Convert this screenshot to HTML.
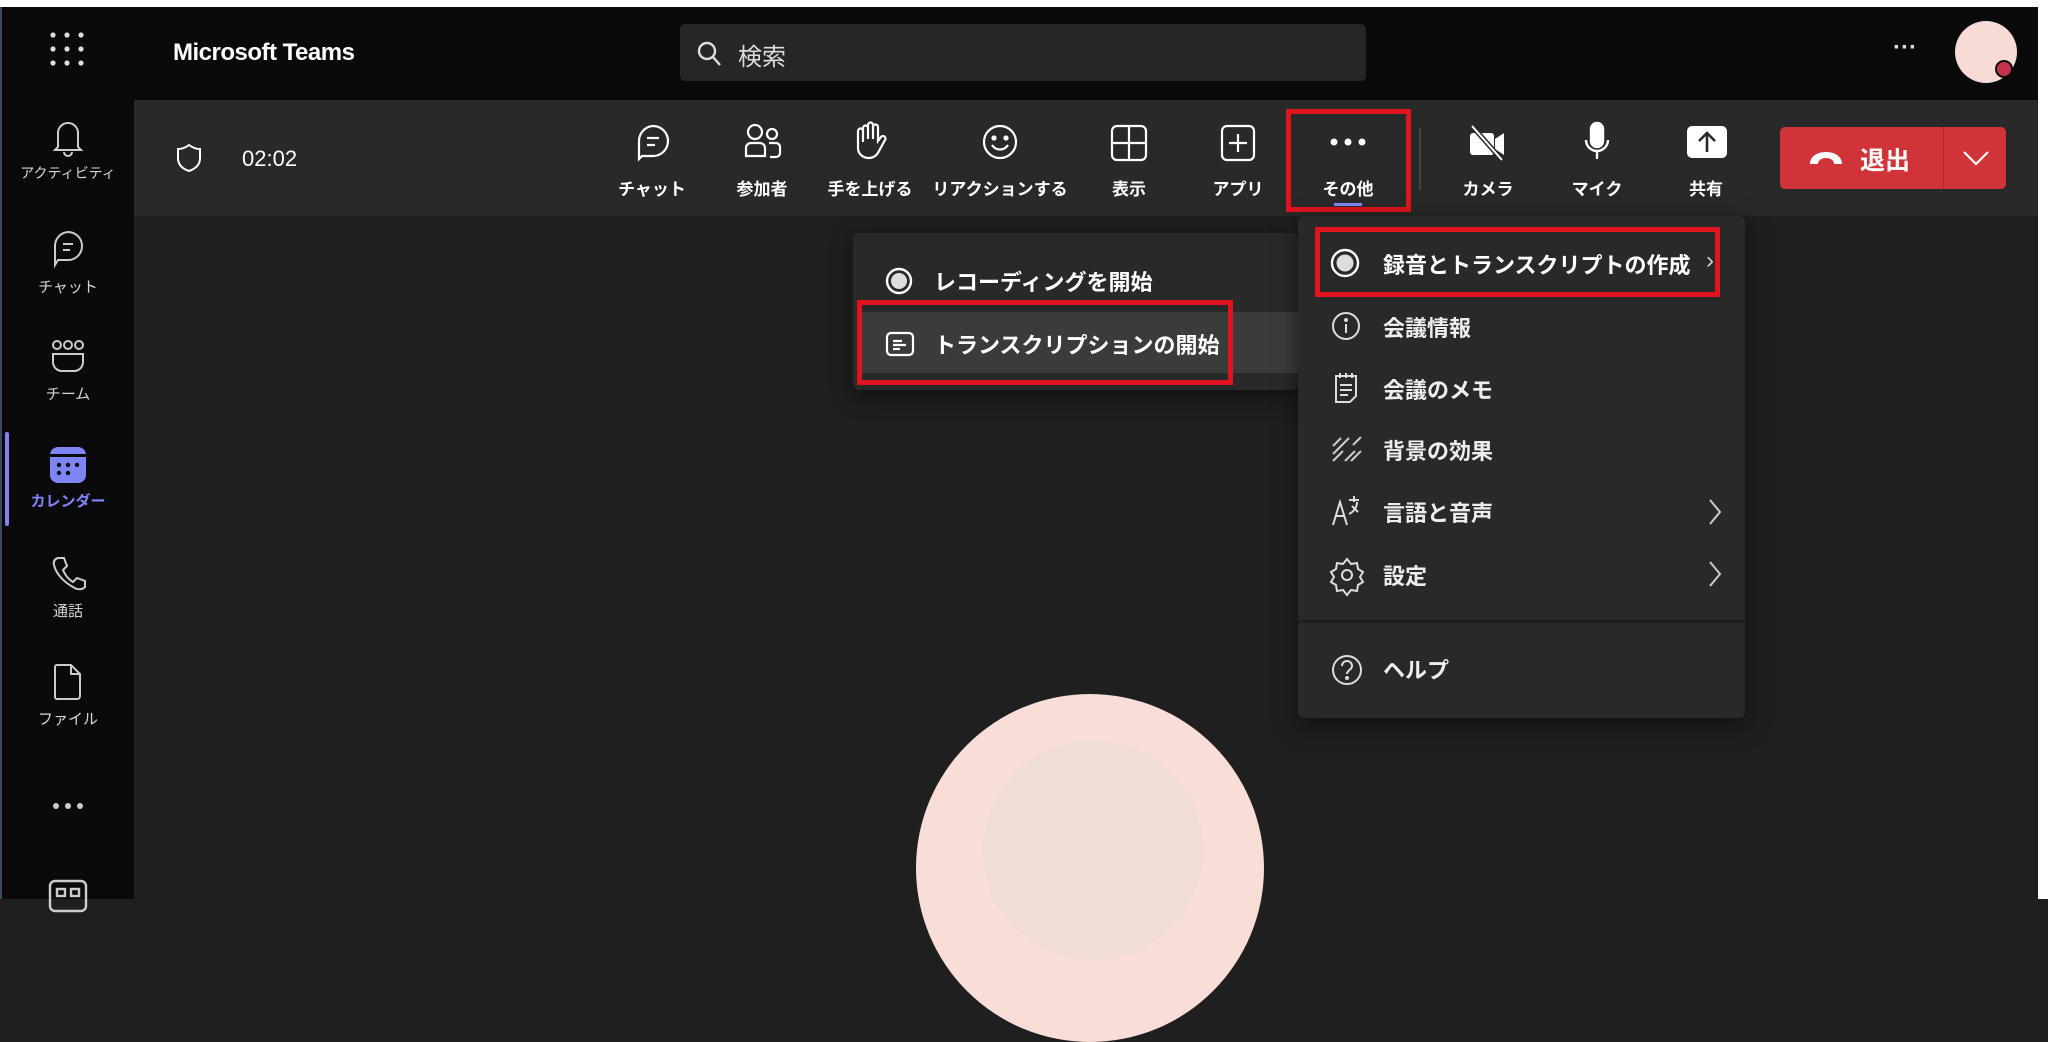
<!DOCTYPE html>
<html><head><meta charset="utf-8"><style>
*{margin:0;padding:0;box-sizing:border-box}
body{width:2048px;height:899px;background:#1f1f1f;position:relative;overflow:hidden;font-family:"Liberation Sans","Noto Sans CJK JP",sans-serif;color:#fff}
.a{position:absolute}
.lbl{position:absolute;transform:translateX(-50%);white-space:nowrap}
svg{position:absolute;overflow:visible}
.rl{font-size:15px;color:#d6d6d6}
.tl{font-size:17px;color:#fff;font-weight:bold}
.mi{position:absolute;font-size:22px;color:#fff;white-space:nowrap;font-weight:bold}
.red{position:absolute;border:5px solid #e0141e}
</style></head><body>
<div class="a" style="left:0;top:0;width:2048px;height:7px;background:#fff"></div>
<div class="a" style="left:2038px;top:0;width:10px;height:899px;background:#fff"></div>
<div class="a" style="left:0;top:7px;width:2038px;height:93px;background:#0a0a0a"></div>
<div class="a" style="left:0;top:7px;width:134px;height:892px;background:#0a0a0a"></div>
<div class="a" style="left:0;top:7px;width:2px;height:892px;background:#3a4a5a"></div>
<svg style="left:50px;top:32px" width="36" height="36"><g fill="#ddd"><circle cx="3" cy="3" r="2.6"/><circle cx="17" cy="3" r="2.6"/><circle cx="31" cy="3" r="2.6"/><circle cx="3" cy="17" r="2.6"/><circle cx="17" cy="17" r="2.6"/><circle cx="31" cy="17" r="2.6"/><circle cx="3" cy="31" r="2.6"/><circle cx="17" cy="31" r="2.6"/><circle cx="31" cy="31" r="2.6"/></g></svg>
<div class="a" style="left:173px;top:39px;font-size:24px;font-weight:bold;letter-spacing:-0.5px">Microsoft Teams</div>
<div class="a" style="left:680px;top:24px;width:686px;height:57px;background:#262626;border-radius:5px"></div>
<svg style="left:696px;top:40px" width="28" height="28" fill="none" stroke="#ddd" stroke-width="2.4"><circle cx="11" cy="11" r="8"/><path d="M17 17l7 8"/></svg>
<div class="a" style="left:738px;top:37px;font-size:24px;color:#ddd">検索</div>
<div class="a" style="left:1893px;top:34px;font-size:24px;font-weight:bold;color:#ddd">···</div>
<div class="a" style="left:1955px;top:21px;width:62px;height:62px;border-radius:50%;background:#f7dcd6"></div>
<div class="a" style="left:1995px;top:60px;width:18px;height:18px;border-radius:50%;background:#c4314b;border:2px solid #0a0a0a"></div>
<svg style="left:54px;top:120px" width="28" height="38" fill="none" stroke="#ccc" stroke-width="2"><path d="M4 27V13a10 10 0 0 1 20 0v14l3 3H1z"/><path d="M10 32a4 4 0 0 0 8 0"/></svg>
<div class="lbl rl" style="left:68px;top:163px;font-size:14px">アクティビティ</div>
<svg style="left:52px;top:230px" width="32" height="40" fill="none" stroke="#ccc" stroke-width="2"><path d="M16 2a14 14 0 0 1 0 28H6l-3 5V16A14 14 0 0 1 16 2z"/><path d="M11 14h10M11 20h7"/></svg>
<div class="lbl rl" style="left:68px;top:276px">チャット</div>
<svg style="left:50px;top:340px" width="36" height="34" fill="none" stroke="#ccc" stroke-width="2"><circle cx="7" cy="5" r="4"/><circle cx="18" cy="5" r="4"/><circle cx="29" cy="5" r="4"/><path d="M3 14h30v8a9 9 0 0 1-9 9H12a9 9 0 0 1-9-9z"/></svg>
<div class="lbl rl" style="left:68px;top:383px">チーム</div>
<div class="a" style="left:5px;top:432px;width:4px;height:94px;background:#7f85f5;border-radius:2px"></div>
<svg style="left:50px;top:447px" width="36" height="36"><rect x="0" y="0" width="36" height="36" rx="8" fill="#7f85f5"/><rect x="0" y="7" width="36" height="3" fill="#0a0a0a"/><g fill="#0a0a0a"><circle cx="9" cy="18" r="2.2"/><circle cx="18" cy="18" r="2.2"/><circle cx="27" cy="18" r="2.2"/><circle cx="9" cy="26" r="2.2"/><circle cx="18" cy="26" r="2.2"/></g></svg>
<div class="lbl rl" style="left:68px;top:490px;color:#7f85f5;font-weight:bold">カレンダー</div>
<svg style="left:52px;top:556px" width="32" height="36" fill="none" stroke="#ccc" stroke-width="2"><path d="M6 2l6 0 3 8-4 4c2 5 5 9 10 12l4-4 8 3v6c-3 3-8 3-12 0C12 26 4 18 2 9 1 5 3 3 6 2z"/></svg>
<div class="lbl rl" style="left:68px;top:600px">通話</div>
<svg style="left:54px;top:664px" width="28" height="36" fill="none" stroke="#ccc" stroke-width="2"><path d="M3 1h14l9 9v22a3 3 0 0 1-3 3H3a2 2 0 0 1-2-2V3a2 2 0 0 1 2-2z"/><path d="M17 1v9h9"/></svg>
<div class="lbl rl" style="left:68px;top:708px">ファイル</div>
<svg style="left:52px;top:802px" width="32" height="8" fill="#ccc"><circle cx="4" cy="4" r="3"/><circle cx="16" cy="4" r="3"/><circle cx="28" cy="4" r="3"/></svg>
<svg style="left:49px;top:880px" width="38" height="30" fill="none" stroke="#ccc" stroke-width="2.4"><rect x="1" y="1" width="36" height="30" rx="5"/><rect x="8" y="9" width="8" height="7"/><rect x="22" y="9" width="8" height="7"/></svg>
<div class="a" style="left:134px;top:100px;width:1904px;height:116px;background:#292929"></div>
<svg style="left:177px;top:144px" width="24" height="28" fill="none" stroke="#fff" stroke-width="2"><path d="M12 1C8 4 4 5 1 5v9c0 7 5 11 11 13 6-2 11-6 11-13V5c-3 0-7-1-11-4z"/></svg>
<div class="a" style="left:242px;top:146px;font-size:22px;color:#fff">02:02</div>
<svg style="left:636px;top:124px" width="34" height="36" fill="none" stroke="#fff" stroke-width="2.2"><path d="M17 2a15 15 0 0 1 0 30H6l-3 3V17A15 15 0 0 1 17 2z"/><path d="M11 14h12M11 21h8"/></svg>
<div class="lbl tl" style="left:652px;top:175px">チャット</div>
<svg style="left:744px;top:124px" width="38" height="36" fill="none" stroke="#fff" stroke-width="2.2"><circle cx="11" cy="8" r="7"/><circle cx="28" cy="10" r="5"/><path d="M2 32v-8a5 5 0 0 1 5-5h9a5 5 0 0 1 5 5v8zM25 19h7a4 4 0 0 1 4 4v6a4 4 0 0 1-4 4h-6"/></svg>
<div class="lbl tl" style="left:762px;top:175px">参加者</div>
<svg style="left:854px;top:122px" width="32" height="40" fill="none" stroke="#fff" stroke-width="2.2"><path d="M9 20V6a2.5 2.5 0 0 1 5 0v11V3a2.5 2.5 0 0 1 5 0v14V5a2.5 2.5 0 0 1 5 0v14l3-4a2.5 2.5 0 0 1 4 3l-6 11c-2 4-5 7-10 7-6 0-11-4-11-10V9a2.5 2.5 0 0 1 5 0z"/></svg>
<div class="lbl tl" style="left:870px;top:175px">手を上げる</div>
<svg style="left:982px;top:124px" width="36" height="36" fill="none" stroke="#fff" stroke-width="2.2"><circle cx="18" cy="18" r="16"/><circle cx="12" cy="14" r="1.5" fill="#fff"/><circle cx="24" cy="14" r="1.5" fill="#fff"/><path d="M10 21c4 6 12 6 16 0"/></svg>
<div class="lbl tl" style="left:1000px;top:175px">リアクションする</div>
<svg style="left:1111px;top:125px" width="36" height="36" fill="none" stroke="#fff" stroke-width="2.2"><rect x="1" y="1" width="34" height="34" rx="5"/><path d="M18 1v34M1 18h34"/></svg>
<div class="lbl tl" style="left:1129px;top:175px">表示</div>
<svg style="left:1221px;top:125px" width="34" height="36" fill="none" stroke="#fff" stroke-width="2.2"><rect x="1" y="1" width="32" height="34" rx="5"/><path d="M17 9v18M8 18h18"/></svg>
<div class="lbl tl" style="left:1238px;top:175px">アプリ</div>
<svg style="left:1330px;top:138px" width="36" height="8" fill="#fff"><circle cx="4" cy="4" r="3.5"/><circle cx="18" cy="4" r="3.5"/><circle cx="32" cy="4" r="3.5"/></svg>
<div class="lbl tl" style="left:1348px;top:175px">その他</div>
<div class="a" style="left:1334px;top:203px;width:28px;height:3px;background:#7f85f5"></div>
<div class="red" style="left:1286px;top:109px;width:125px;height:103px"></div>
<div class="a" style="left:1419px;top:128px;width:2px;height:62px;background:#444"></div>
<svg style="left:1468px;top:124px" width="40" height="38"><rect x="2" y="9" width="24" height="22" rx="3" fill="#fff"/><path d="M27 15l9-6v22l-9-6z" fill="#fff"/><path d="M4 2l30 34" stroke="#292929" stroke-width="5"/><path d="M4 2l30 34" stroke="#fff" stroke-width="2"/></svg>
<div class="lbl tl" style="left:1488px;top:175px">カメラ</div>
<svg style="left:1584px;top:122px" width="26" height="40" fill="none" stroke="#fff" stroke-width="2.4"><rect x="7" y="1" width="12" height="24" rx="6" fill="#fff"/><path d="M2 18a11 11 0 0 0 22 0M13 29v8"/></svg>
<div class="lbl tl" style="left:1597px;top:175px">マイク</div>
<svg style="left:1687px;top:126px" width="40" height="32"><rect x="0" y="0" width="40" height="32" rx="5" fill="#fff"/><path d="M20 26V8M12 15l8-8 8 8" stroke="#292929" stroke-width="2.6" fill="none"/></svg>
<div class="lbl tl" style="left:1706px;top:175px">共有</div>
<div class="a" style="left:1780px;top:127px;width:226px;height:62px;background:#d13438;border-radius:5px"></div>
<div class="a" style="left:1943px;top:127px;width:1px;height:62px;background:#a82a2e"></div>
<svg style="left:1808px;top:150px" width="36" height="16"><path d="M2 14c0-8 8-12 16-12s16 4 16 12h-8c0-4-4-6-8-6s-8 2-8 6z" fill="#fff"/></svg>
<div class="a" style="left:1860px;top:141px;font-size:25px;font-weight:bold">退出</div>
<svg style="left:1962px;top:150px" width="28" height="16" fill="none" stroke="#fff" stroke-width="2.2"><path d="M2 2l12 12L26 2"/></svg>
<div class="a" style="left:916px;top:694px;width:348px;height:348px;border-radius:50%;background:#f9ddd7"></div>
<div class="a" style="left:983px;top:740px;width:220px;height:220px;border-radius:50%;background:#f0ddd8"></div>
<div class="a" style="left:853px;top:233px;width:445px;height:157px;background:#292929;border-radius:6px;box-shadow:0 6px 20px rgba(0,0,0,.5)"></div>
<div class="a" style="left:857px;top:312px;width:441px;height:61px;background:#3b3b3b"></div>
<svg style="left:885px;top:267px" width="28" height="28"><circle cx="14" cy="14" r="12" fill="none" stroke="#fff" stroke-width="2.4"/><circle cx="14" cy="14" r="8" fill="#ddd"/></svg>
<div class="mi" style="left:934px;top:265px">レコーディングを開始</div>
<svg style="left:886px;top:332px" width="28" height="24" fill="none" stroke="#fff" stroke-width="2.2"><rect x="1" y="1" width="26" height="22" rx="4"/><path d="M7 9h9M7 13h13M7 17h7"/></svg>
<div class="mi" style="left:934px;top:328px">トランスクリプションの開始</div>
<div class="red" style="left:857px;top:300px;width:376px;height:85px"></div>
<div class="a" style="left:1298px;top:216px;width:447px;height:502px;background:#292929;border-radius:6px;box-shadow:0 6px 24px rgba(0,0,0,.5)"></div>
<svg style="left:1330px;top:248px" width="30" height="30"><circle cx="15" cy="15" r="13" fill="none" stroke="#fff" stroke-width="2.4"/><circle cx="15" cy="15" r="8.5" fill="#ddd"/></svg>
<div class="mi" style="left:1383px;top:248px">録音とトランスクリプトの作成</div>
<div class="a" style="left:1706px;top:247px;font-size:24px;color:#ccc">›</div>
<div class="red" style="left:1315px;top:227px;width:405px;height:70px"></div>
<svg style="left:1331px;top:311px" width="30" height="30" fill="none" stroke="#ddd" stroke-width="2"><circle cx="15" cy="15" r="13"/><path d="M15 13v9"/><circle cx="15" cy="9" r="1" fill="#ddd"/></svg>
<div class="mi" style="left:1383px;top:311px;color:#eee">会議情報</div>
<svg style="left:1334px;top:372px" width="24" height="32" fill="none" stroke="#ddd" stroke-width="2"><path d="M2 4h20v20l-6 6H2zM6 1v5M12 1v5M18 1v5M6 13h12M6 18h12M6 23h8"/></svg>
<div class="mi" style="left:1383px;top:373px;color:#eee">会議のメモ</div>
<svg style="left:1331px;top:436px" width="32" height="26" fill="none" stroke="#ccc" stroke-width="2"><path d="M2 10l8-8M2 18l16-16M2 25l10-10M14 25l10-10M20 25l10-10M22 9l8-8"/></svg>
<div class="mi" style="left:1383px;top:434px;color:#eee">背景の効果</div>
<svg style="left:1331px;top:494px" width="32" height="32" fill="none" stroke="#ddd" stroke-width="2"><path d="M2 31L9 8l7 23M5 22h9M18 6h10M23 2v6M26 8c0 6-4 10-8 12M21 12l6 6"/></svg>
<div class="mi" style="left:1383px;top:496px;color:#eee">言語と音声</div>
<svg style="left:1708px;top:498px" width="14" height="28" fill="none" stroke="#ccc" stroke-width="2"><path d="M2 2l10 12L2 26"/></svg>
<svg style="left:1331px;top:558px" width="32" height="34" fill="none" stroke="#ddd" stroke-width="2"><path d="M16 1l4 5 6-1 1 6 5 3-3 5 3 5-5 3-1 6-6-1-4 5-4-5-6 1-1-6-5-3 3-5-3-5 5-3 1-6 6 1z"/><circle cx="16" cy="17" r="5"/></svg>
<div class="mi" style="left:1383px;top:559px;color:#eee">設定</div>
<svg style="left:1708px;top:560px" width="14" height="28" fill="none" stroke="#ccc" stroke-width="2"><path d="M2 2l10 12L2 26"/></svg>
<div class="a" style="left:1298px;top:620px;width:447px;height:3px;background:#1f1f1f"></div>
<svg style="left:1331px;top:654px" width="32" height="32" fill="none" stroke="#ddd" stroke-width="2"><circle cx="16" cy="16" r="14"/><path d="M11 12a5 5 0 0 1 10 0c0 4-5 4-5 8"/><circle cx="16" cy="24" r="1" fill="#ddd"/></svg>
<div class="mi" style="left:1383px;top:653px;color:#eee">ヘルプ</div>
</body></html>
